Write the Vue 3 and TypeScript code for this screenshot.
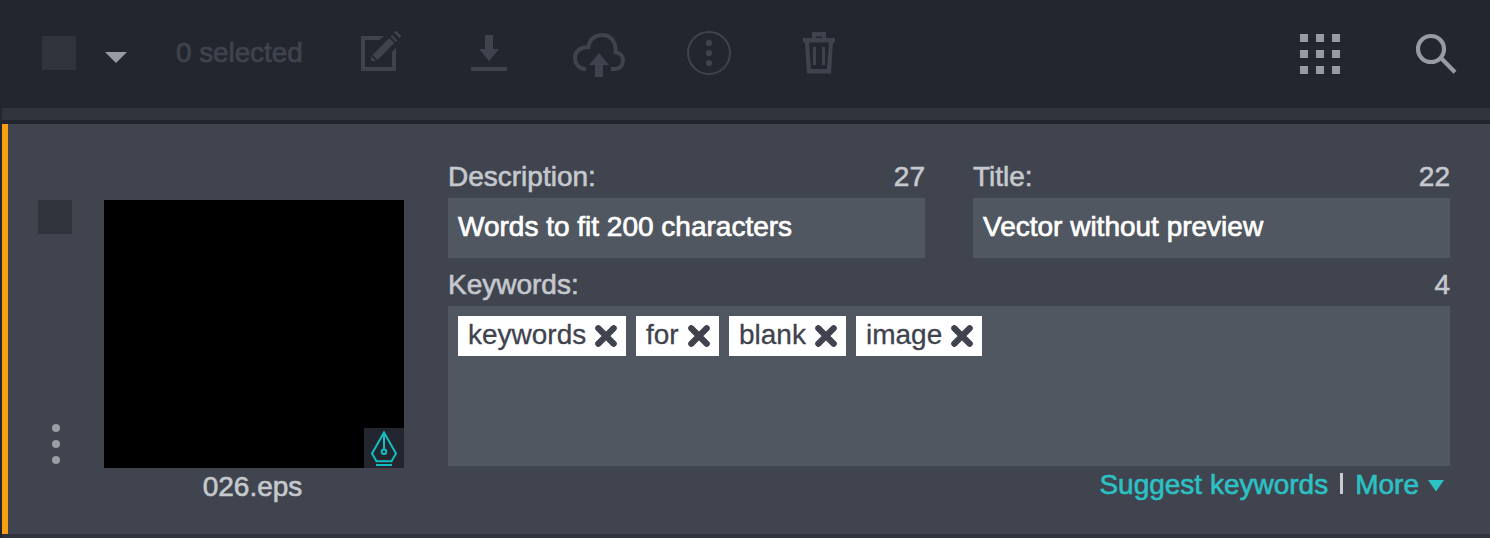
<script setup lang="ts">
import { ref } from 'vue'

const selected = ref<number>(0)
const description = ref('Words to fit 200 characters')
const title = ref('Vector without preview')
const keywords = ref<string[]>(['keywords', 'for', 'blank', 'image'])
const gridCells = Array.from({ length: 9 }, (_, i) => i)

function removeKeyword(word: string): void {
  keywords.value = keywords.value.filter((k) => k !== word)
}
</script>

<template>
  <div class="page">
    <header class="toolbar">
      <span class="check"></span>
      <svg class="caret" width="22" height="12" viewBox="0 0 22 12"><path d="M0 0H22L11 11Z" /></svg>
      <span class="selected">{{ selected }} selected</span>
      <svg class="tool edit" width="42" height="48" viewBox="360 28 42 48">
        <path d="M384 36H361V71H396V47.500L392 52V67H365V40H379.500Z" />
        <path d="M371 56V61H376ZM372.500 55L389.300 38L394.300 43L377.500 60ZM390.500 36.500L392 35L397.500 40.500L396 42ZM394 32.500L395.800 30.800L401.300 36.300L399.500 38Z" />
      </svg>
      <svg class="tool download" width="36" height="48" viewBox="471 28 36 48">
        <path d="M485 35H493V49H499L489 61L479 49H485ZM471 67H507V71H471Z" />
      </svg>
      <svg class="tool upload" width="54" height="50" viewBox="572 28 54 50">
        <path class="line" d="M586 69H584.500C578.500 68 575 63.500 575 58C575 51.500 580.500 46.500 588.500 47.200C589 39.500 595 35 602 35C610.500 35 616.500 41.500 615.500 52.200C620 52.700 623 56 623 60.500C623 65.500 620 69 614.500 69H611" />
        <path d="M599 53L609 65H603V77H595V65H589Z" />
      </svg>
      <svg class="tool more" width="44" height="50" viewBox="687 28 44 50">
        <circle class="ring" cx="709" cy="53" r="21" />
        <circle cx="709" cy="43" r="3.100" /><circle cx="709" cy="53" r="3.100" /><circle cx="709" cy="63" r="3.100" />
      </svg>
      <svg class="tool trash" width="32" height="48" viewBox="803 28 32 48">
        <path fill-rule="evenodd" d="M812 32H826V38H835V42.500H833L831 73.500H807L805 42.500H803V38H812ZM816 36.500V38H822V36.500ZM809 42.500L811 69H827L829 42.500Z" />
        <path d="M813 47H816V65H813ZM822 47H825V65H822Z" />
      </svg>
      <div class="grid-icon"><i v-for="cell in gridCells" :key="cell"></i></div>
      <svg class="search" width="42" height="42" viewBox="1415 33 42 42">
        <circle cx="1431" cy="49" r="13" /><path d="M1440.500 57.500L1455 72.200" />
      </svg>
    </header>
    <div class="strip"></div>
    <main class="card">
      <aside class="side">
        <span class="check"></span>
        <span class="dots"><i></i><i></i><i></i></span>
      </aside>
      <figure class="asset">
        <div class="thumb">
          <svg class="pen" width="40" height="40" viewBox="0 0 40 40">
            <path d="M20 4.500L8 25.500L12.500 33.300H27.500L32 25.500ZM20 5V21.500" />
            <circle cx="20" cy="23.800" r="2.300" /><path d="M12 37H28" />
          </svg>
        </div>
        <figcaption>026.eps</figcaption>
      </figure>
      <section class="form">
        <div class="pair">
          <div class="group">
            <div class="label"><span>Description:</span><span>{{ description.length }}</span></div>
            <div class="field">{{ description }}</div>
          </div>
          <div class="group">
            <div class="label"><span>Title:</span><span>{{ title.length }}</span></div>
            <div class="field title">{{ title }}</div>
          </div>
        </div>
        <div class="label keys-label"><span>Keywords:</span><span>{{ keywords.length }}</span></div>
        <div class="keywords">
          <span v-for="word in keywords" :key="word" class="tag" :class="word">
            <span>{{ word }}</span>
            <svg width="22" height="22" viewBox="0 0 22 22" @click="removeKeyword(word)"><path d="M3.300 3.300L18.700 18.700M18.700 3.300L3.300 18.700" /></svg>
          </span>
        </div>
        <div class="links">
          <a class="suggest">Suggest keywords</a><i class="bar"></i><a class="more-link">More</a>
          <svg width="16" height="12" viewBox="0 0 16 12"><path d="M0 0H16L8 11.500Z" /></svg>
        </div>
      </section>
    </main>
    <div class="bottom"></div>
  </div>
</template>

<style>
body { margin: 0; background: #23262e; }
</style>

<style scoped>
.page { width: 1490px; height: 538px; overflow: hidden; background: #23262e; font-family: "Liberation Sans", Arial, sans-serif; font-size: 28px; line-height: 32px; color: #c5c9ce; }
.page svg { display: block; flex: none; }
.toolbar { height: 108px; display: flex; align-items: flex-start; box-sizing: border-box; padding-left: 42px; }
.check { flex: none; width: 34px; height: 34px; background: #30333c; }
.toolbar .check { margin-top: 36px; }
.caret { margin: 52px 0 0 29px; fill: #989ba4; }
.selected { width: 134px; margin: 37px 0 0 49px; color: #40434e; white-space: nowrap; letter-spacing: -.1px; -webkit-text-stroke: .7px #40434e; }
.tool { margin-top: 28px; fill: #40434e; }
.edit { margin-left: 50px; }
.download { margin-left: 69px; }
.upload { margin-left: 65px; }
.more { margin-left: 61px; }
.trash { margin-left: 72px; }
.line { fill: none; stroke: #40434e; stroke-width: 4; }
.ring { fill: none; stroke: #40434e; stroke-width: 2; }
.grid-icon { display: grid; grid-template-columns: repeat(3, 8px); grid-auto-rows: 8px; gap: 8px; margin: 34px 0 0 465px; }
.grid-icon i { background: #989ba4; }
.search { margin: 33px 0 0 75px; fill: none; stroke: #989ba4; stroke-width: 4.200; }
.strip { height: 12px; margin: 0 0 4px 2px; background: #30333c; }
.card { display: flex; height: 410px; box-sizing: border-box; margin-left: 2px; border-left: 6px solid #f9a012; background: #40444e; }
.bottom { height: 4px; margin-left: 2px; background: #30333c; }
.side { display: flex; flex-direction: column; width: 96px; box-sizing: border-box; padding: 76px 0 0 30px; }
.dots { display: flex; flex-direction: column; gap: 8px; margin: 190px 0 0 14px; }
.dots i { width: 8px; height: 8px; border-radius: 50%; background: #9a9da6; }
.asset { width: 300px; margin: 76px 44px 0 0; }
.thumb { display: flex; align-items: flex-end; justify-content: flex-end; height: 268px; background: #000; }
.pen { background: #23262e; fill: none; stroke: #12bec3; stroke-width: 2; }
figcaption { margin-top: 3px; padding-right: 3px; text-align: center; -webkit-text-stroke: .6px #c5c9ce; }
.form { width: 1002px; padding-top: 37px; }
.pair { display: grid; grid-template-columns: 477px 477px; gap: 48px; }
.label { display: flex; justify-content: space-between; height: 37px; -webkit-text-stroke: .6px #c5c9ce; }
.field { height: 60px; box-sizing: border-box; padding: 13px 10px; background: #515760; color: #fff; white-space: nowrap; -webkit-text-stroke: .7px #fff; }
.keys-label { margin-top: 11px; }
.keywords { display: flex; align-items: flex-start; gap: 10px; height: 160px; box-sizing: border-box; padding: 10px; background: #515760; }
.tag { display: flex; justify-content: space-between; height: 40px; box-sizing: border-box; padding: 3px 9px 0 10px; background: #fff; color: #40434d; -webkit-text-stroke: .3px #40434d; }
.tag svg { margin: 6px 0 0 -2px; fill: none; stroke: #40434d; stroke-width: 6.200; stroke-linecap: round; }
.tag.keywords { width: 168px; }
.tag.for { width: 83px; }
.tag.blank { width: 117px; }
.tag.image { width: 126px; }
.links { display: flex; align-items: flex-start; justify-content: flex-end; padding: 3px 6px 0 0; color: #2bc1c5; -webkit-text-stroke: .6px #2bc1c5; }
.bar { width: 3px; height: 21px; margin: 4px 12px 0 12px; background: #c8cbd0; }
.links svg { margin: 11px 0 0 9px; fill: #2bc1c5; }
</style>
